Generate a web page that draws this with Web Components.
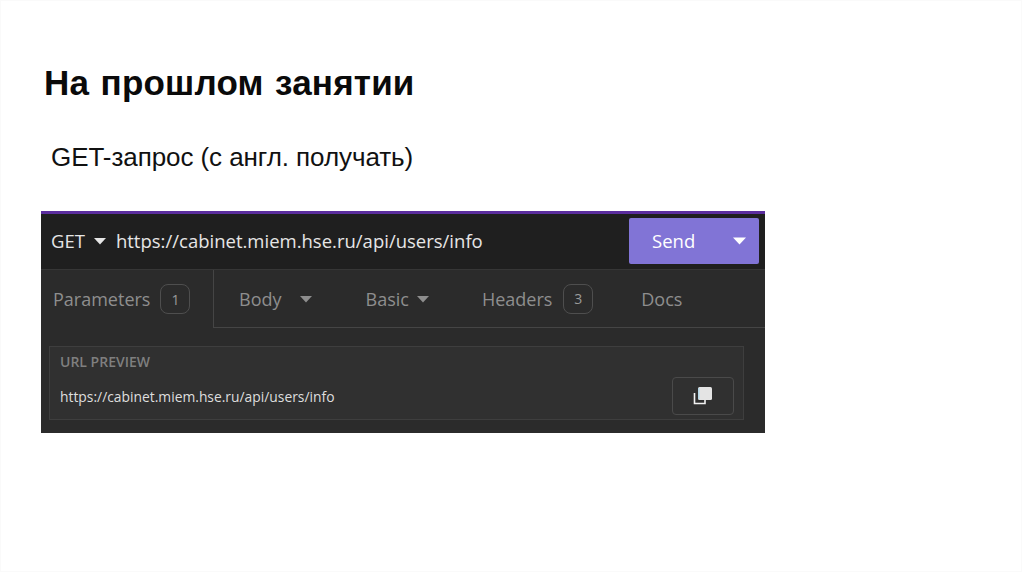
<!DOCTYPE html>
<html lang="ru">
<head>
<meta charset="utf-8">
<title>На прошлом занятии</title>
<style>
html, body { margin: 0; background: #fff; }
</style>
</head>
<body>
<slide-page>
  <h-title slot="title">На прошлом занятии</h-title>
  <span slot="sub">GET-запрос (с англ. получать)</span>
  <api-panel url="https://cabinet.miem.hse.ru/api/users/info"></api-panel>
</slide-page>
<script>
class SlidePage extends HTMLElement {
    connectedCallback() {
        this.attachShadow({ mode: 'open' });
        this.shadowRoot.innerHTML = `
            <style>
                :host {
                    display: block;
                    width: 1022px;
                    height: 572px;
                    box-sizing: border-box;
                    padding: 62px 0 0 40px;
                    border: 1px solid #fafafa;
                    overflow: hidden;
                    font-family: "Liberation Sans", Arial, sans-serif;
                    color: #000;
                }
                .title {
                    padding-left: 3px;
                    height: 40px;
                    line-height: 40px;
                    font-size: 35px;
                    font-weight: bold;
                    letter-spacing: 0.2px;
                    word-spacing: 1.5px;
                    color: #0a0a0a;
                }
                .sub {
                    margin-top: 38px;
                    padding-left: 10px;
                    height: 33px;
                    line-height: 33px;
                    font-size: 26px;
                    letter-spacing: -0.07px;
                    color: #111;
                }
                .body { margin-top: 37px; }
            </style>
            <div class="title"><slot name="title"></slot></div>
            <div class="sub"><slot name="sub"></slot></div>
            <div class="body"><slot></slot></div>
        `;
    }
}

class HTitle extends HTMLElement {
    connectedCallback() {
        this.attachShadow({ mode: 'open' });
        this.shadowRoot.innerHTML = `<style>:host { display: inline; }</style><slot></slot>`;
    }
}

class ApiTab extends HTMLElement {
    connectedCallback() {
        const count = this.getAttribute('count');
        const caret = this.hasAttribute('caret');
        this.attachShadow({ mode: 'open' });
        this.shadowRoot.innerHTML = `
            <style>
                :host {
                    display: flex;
                    align-items: center;
                    height: 100%;
                    box-sizing: border-box;
                    color: #8e8e8e;
                    font-size: 18px;
                }
                .count {
                    box-sizing: border-box;
                    width: 30px;
                    height: 30px;
                    margin-left: var(--count-gap, 10px);
                    border: 1px solid #4e4e4e;
                    border-radius: 8px;
                    display: flex;
                    align-items: center;
                    justify-content: center;
                    font-size: 14px;
                    color: #9a9a9a;
                }
                svg { margin-left: var(--caret-gap, 17px); }
            </style>
            <slot></slot>
            ${count ? `<span class="count">${count}</span>` : ''}
            ${caret ? `<svg width="14" height="8" viewBox="0 0 14 8"><path d="M1 1h12L7 7.5z" fill="#8e8e8e"/></svg>` : ''}
        `;
    }
}

class UrlPreview extends HTMLElement {
    connectedCallback() {
        this.attachShadow({ mode: 'open' });
        this.shadowRoot.innerHTML = `
            <style>
                :host {
                    display: block;
                    box-sizing: border-box;
                    height: 74px;
                    margin: 18px 21px 0 8px;
                    padding: 5px 9px 0 10px;
                    background: #303030;
                    border: 1px solid #3e3e3e;
                }
                .label {
                    font-size: 14px;
                    font-weight: 600;
                    line-height: 19px;
                    color: #7f7f7f;
                }
                .row {
                    display: flex;
                    align-items: center;
                    justify-content: space-between;
                    margin-top: 6px;
                    font-size: 13.85px;
                    color: #dedede;
                }
                .copy {
                    box-sizing: border-box;
                    width: 62px;
                    height: 38px;
                    border: 1px solid #4a4a4a;
                    border-radius: 4px;
                    display: flex;
                    align-items: center;
                    justify-content: center;
                }
            </style>
            <div class="label">URL PREVIEW</div>
            <div class="row">
                <span><slot></slot></span>
                <span class="copy">
                    <svg width="20" height="20" viewBox="0 0 20 20">
                        <path d="M1.5 7v10.5h10.5V14" fill="none" stroke="#f2f2f2" stroke-width="1.6"/>
                        <rect x="5" y="1" width="14" height="13" rx="1.5" fill="#e4e4e4"/>
                        <rect x="5" y="2" width="1.5" height="11" fill="#b5d7e6"/>
                    </svg>
                </span>
            </div>
        `;
    }
}

class ApiPanel extends HTMLElement {
    connectedCallback() {
        const url = this.getAttribute('url');
        this.attachShadow({ mode: 'open' });
        this.shadowRoot.innerHTML = `
            <style>
                :host {
                    display: block;
                    width: 724px;
                    height: 222px;
                    box-sizing: border-box;
                    border-top: 3px solid #5b2d9e;
                    background: #2b2b2b;
                    font-family: "Open Sans", "Noto Sans", sans-serif;
                }
                .bar {
                    display: flex;
                    align-items: center;
                    height: 56px;
                    box-sizing: border-box;
                    background: #1f1f1f;
                    border-bottom: 1px solid #363636;
                    color: #e6e6e6;
                    font-size: 18.5px;
                    padding: 0 6px 2px 10px;
                }
                .caret { margin: 0 9px 0 8px; }
                .url { flex: 1; }
                .send {
                    box-sizing: border-box;
                    width: 130px;
                    height: 46px;
                    display: flex;
                    align-items: center;
                    justify-content: space-between;
                    padding: 0 12px 0 23px;
                    background: #8174d6;
                    border-radius: 2px;
                    color: #fff;
                    font-size: 18.5px;
                }
                .tabs {
                    display: flex;
                    height: 58px;
                    box-sizing: border-box;
                }
                .active {
                    width: 173px;
                    padding-left: 12px;
                    box-sizing: border-box;
                    border-right: 1px solid #454545;
                }
                .rest {
                    flex: 1;
                    display: flex;
                    border-bottom: 1px solid #454545;
                    padding-left: 25px;
                }
                .basic { margin-left: 53px; --caret-gap: 7px; }
                .headers { margin-left: 52px; --count-gap: 11px; }
                .docs { margin-left: 48px; }
            </style>
            <div class="bar">
                <span>GET</span>
                <svg class="caret" width="14" height="8" viewBox="0 0 14 8"><path d="M1 1h12L7 7.5z" fill="#e6e6e6"/></svg>
                <span class="url">${url}</span>
                <span class="send">Send <svg width="15" height="8" viewBox="0 0 15 8"><path d="M1 .5h13L7.5 7.5z" fill="#fff"/></svg></span>
            </div>
            <div class="tabs">
                <api-tab class="active" count="1">Parameters</api-tab>
                <div class="rest">
                    <api-tab caret>Body</api-tab>
                    <api-tab class="basic" caret>Basic</api-tab>
                    <api-tab class="headers" count="3">Headers</api-tab>
                    <api-tab class="docs">Docs</api-tab>
                </div>
            </div>
            <url-preview>${url}</url-preview>
        `;
    }
}

customElements.define('slide-page', SlidePage);
customElements.define('h-title', HTitle);
customElements.define('api-tab', ApiTab);
customElements.define('url-preview', UrlPreview);
customElements.define('api-panel', ApiPanel);
</script>
</body>
</html>
